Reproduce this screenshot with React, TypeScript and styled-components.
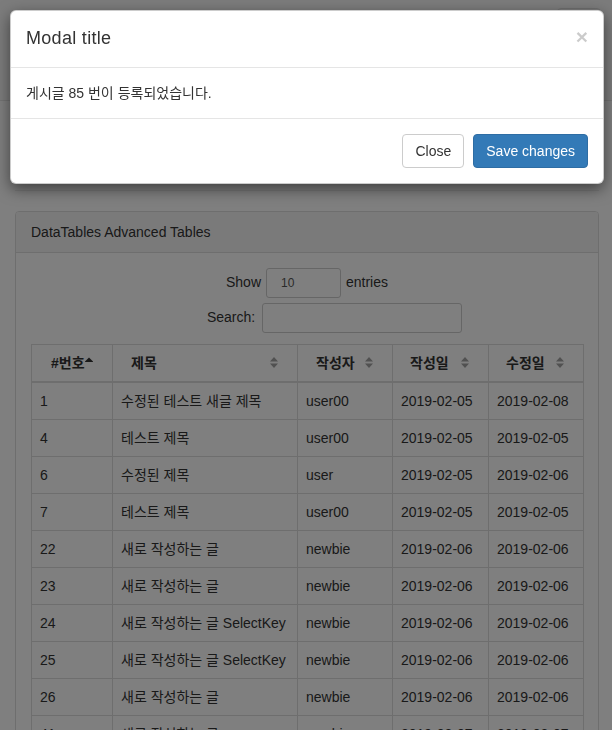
import React from "react";
import styled, { createGlobalStyle } from "styled-components";

const GlobalStyle = createGlobalStyle`
  html, body {
    margin: 0;
    padding: 0;
    overflow: hidden;
    background: #fff;
  }
  body {
    font-family: "Liberation Sans", "Noto Sans CJK KR", Arial, sans-serif;
    font-size: 14px;
    line-height: 1.42857;
    color: #333;
  }
  *, *::before, *::after { box-sizing: border-box; }
`;

const Page = styled.div`
  width: 614px;
`;

const Navbar = styled.nav`
  height: 101px;
  background: #f8f8f8;
  border-bottom: 1px solid #e7e7e7;
  display: flex;
  justify-content: flex-end;
  align-items: flex-start;
  padding-right: 13px;
`;

const Toggle = styled.button`
  margin-top: 8px;
  width: 44px;
  height: 34px;
  padding: 9px 10px;
  border: 1px solid #ddd;
  border-radius: 4px;
  background: transparent;
  display: flex;
  flex-direction: column;
  gap: 4px;
`;

const IconBar = styled.span`
  display: block;
  width: 22px;
  height: 2px;
  border-radius: 1px;
  background: #888;
`;

const Wrapper = styled.div`
  padding: 0 15px;
`;

const PageHeader = styled.div`
  margin: 40px 0 20px;
  height: 49.6px;
  border-bottom: 1px solid #eee;
`;

const Panel = styled.section`
  border: 1px solid #ddd;
  border-radius: 4px;
  background: #fff;
  margin-bottom: 20px;
`;

const PanelHeading = styled.div`
  padding: 10px 15px;
  background: #f5f5f5;
  border-bottom: 1px solid #ddd;
  border-radius: 3px 3px 0 0;
  line-height: 20px;
`;

const PanelBody = styled.div`
  padding: 15px;
`;

const ControlRow = styled.div<{ $shift?: number; $gap: number }>`
  display: flex;
  justify-content: center;
  align-items: center;
  gap: ${(p) => p.$gap}px;
  padding-left: ${(p) => p.$shift ?? 0}px;
  height: 30px;
  & + & {
    margin-top: 5px;
  }
`;

const Select = styled.select`
  appearance: none;
  -webkit-appearance: none;
  width: 75px;
  height: 30px;
  padding: 5px 14px;
  font-family: inherit;
  font-size: 12px;
  color: #555;
  background: #fff;
  border: 1px solid #ccc;
  border-radius: 3px;
`;

const SearchInput = styled.input`
  width: 200px;
  height: 30px;
  padding: 5px 10px;
  font-size: 12px;
  background: #fff;
  border: 1px solid #ccc;
  border-radius: 3px;
`;

const Table = styled.table`
  margin-top: 11px;
  width: 100%;
  border-collapse: collapse;
  table-layout: fixed;
  border: 1px solid #ddd;
`;

const Th = styled.th<{ $pl: number }>`
  position: relative;
  text-align: left;
  font-weight: bold;
  line-height: 20px;
  padding: 8px 30px 8px ${(p) => p.$pl}px;
  border: 1px solid #ddd;
  border-bottom: 2px solid #ddd;
  vertical-align: bottom;
  white-space: nowrap;
`;

const SortIcon = styled.svg<{ $active?: boolean }>`
  position: absolute;
  right: 19px;
  top: 12px;
  fill: #333;
  opacity: ${(p) => (p.$active ? 1 : 0.45)};
`;

const Td = styled.td`
  padding: 8px;
  line-height: 20px;
  border: 1px solid #ddd;
  vertical-align: top;
  white-space: nowrap;
  overflow: hidden;
`;

const Backdrop = styled.div`
  position: fixed;
  inset: 0;
  background: rgba(0, 0, 0, 0.5);
  z-index: 1040;
`;

const ModalContent = styled.div`
  position: fixed;
  top: 10px;
  left: 10px;
  width: 594px;
  z-index: 1050;
  background: #fff;
  border: 1px solid rgba(0, 0, 0, 0.2);
  border-radius: 6px;
  box-shadow: 0 5px 15px rgba(0, 0, 0, 0.5);
`;

const ModalHeader = styled.div`
  display: flex;
  justify-content: space-between;
  align-items: flex-start;
  padding: 15px;
  border-bottom: 1px solid #e5e5e5;
`;

const ModalTitle = styled.h4`
  margin: 0;
  font-size: 18px;
  font-weight: 500;
  line-height: 1.42857;
  letter-spacing: 0.3px;
  color: #333;
`;

const CloseX = styled.button`
  margin-top: 0;
  padding: 0;
  border: 0;
  background: transparent;
  font-family: inherit;
  font-size: 21px;
  font-weight: bold;
  line-height: 1;
  color: #000;
  opacity: 0.2;
  text-shadow: 0 1px 0 #fff;
`;

const ModalBody = styled.div`
  padding: 15px;
  line-height: 20px;
`;

const ModalFooter = styled.div`
  display: flex;
  justify-content: flex-end;
  gap: 9px;
  padding: 15px;
  border-top: 1px solid #e5e5e5;
`;

const Btn = styled.button<{ $primary?: boolean }>`
  height: 34px;
  padding: 6px 12px;
  font-family: inherit;
  font-size: 14px;
  line-height: 20px;
  border-radius: 4px;
  border: 1px solid ${(p) => (p.$primary ? "#2e6da4" : "#ccc")};
  background: ${(p) => (p.$primary ? "#337ab7" : "#fff")};
  color: ${(p) => (p.$primary ? "#fff" : "#333")};
`;

const SortBoth = () => (
  <SortIcon width="8" height="11" viewBox="0 0 8 11">
    <path d="M4 0 L8 4.5 L0 4.5 Z" />
    <path d="M0 6.5 L8 6.5 L4 11 Z" />
  </SortIcon>
);

const SortAsc = () => (
  <SortIcon $active width="8" height="11" viewBox="0 0 8 11">
    <path d="M4 0.5 L8.5 5 L-0.5 5 Z" />
  </SortIcon>
);

const rows: [string, string, string, string, string][] = [
  ["1", "수정된 테스트 새글 제목", "user00", "2019-02-05", "2019-02-08"],
  ["4", "테스트 제목", "user00", "2019-02-05", "2019-02-05"],
  ["6", "수정된 제목", "user", "2019-02-05", "2019-02-06"],
  ["7", "테스트 제목", "user00", "2019-02-05", "2019-02-05"],
  ["22", "새로 작성하는 글", "newbie", "2019-02-06", "2019-02-06"],
  ["23", "새로 작성하는 글", "newbie", "2019-02-06", "2019-02-06"],
  ["24", "새로 작성하는 글 SelectKey", "newbie", "2019-02-06", "2019-02-06"],
  ["25", "새로 작성하는 글 SelectKey", "newbie", "2019-02-06", "2019-02-06"],
  ["26", "새로 작성하는 글", "newbie", "2019-02-06", "2019-02-06"],
  ["41", "새로 작성하는 글", "newbie", "2019-02-07", "2019-02-07"],
];

export default function App() {
  return (
    <>
      <GlobalStyle />
      <Page>
        <Navbar>
          <Toggle aria-label="Toggle navigation">
            <IconBar />
            <IconBar />
            <IconBar />
          </Toggle>
        </Navbar>
        <Wrapper>
          <PageHeader />
          <Panel>
            <PanelHeading>DataTables Advanced Tables</PanelHeading>
            <PanelBody>
              <ControlRow $gap={5}>
                <span>Show</span>
                <Select defaultValue="10">
                  <option value="10">10</option>
                  <option value="25">25</option>
                  <option value="50">50</option>
                  <option value="100">100</option>
                </Select>
                <span>entries</span>
              </ControlRow>
              <ControlRow $gap={7} $shift={55}>
                <span>Search:</span>
                <SearchInput type="search" />
              </ControlRow>
              <Table>
                <colgroup>
                  <col style={{ width: 81 }} />
                  <col style={{ width: 185 }} />
                  <col style={{ width: 95 }} />
                  <col style={{ width: 96 }} />
                  <col style={{ width: 95 }} />
                </colgroup>
                <thead>
                  <tr>
                    <Th $pl={19}>
                      #번호
                      <SortAsc />
                    </Th>
                    <Th $pl={18}>
                      제목
                      <SortBoth />
                    </Th>
                    <Th $pl={18}>
                      작성자
                      <SortBoth />
                    </Th>
                    <Th $pl={17}>
                      작성일
                      <SortBoth />
                    </Th>
                    <Th $pl={17}>
                      수정일
                      <SortBoth />
                    </Th>
                  </tr>
                </thead>
                <tbody>
                  {rows.map((r) => (
                    <tr key={r[0]}>
                      {r.map((c, i) => (
                        <Td key={i}>{c}</Td>
                      ))}
                    </tr>
                  ))}
                </tbody>
              </Table>
            </PanelBody>
          </Panel>
        </Wrapper>
      </Page>
      <Backdrop />
      <ModalContent role="dialog">
        <ModalHeader>
          <ModalTitle>Modal title</ModalTitle>
          <CloseX aria-label="Close">×</CloseX>
        </ModalHeader>
        <ModalBody>게시글 85 번이 등록되었습니다.</ModalBody>
        <ModalFooter>
          <Btn>Close</Btn>
          <Btn $primary>Save changes</Btn>
        </ModalFooter>
      </ModalContent>
    </>
  );
}
